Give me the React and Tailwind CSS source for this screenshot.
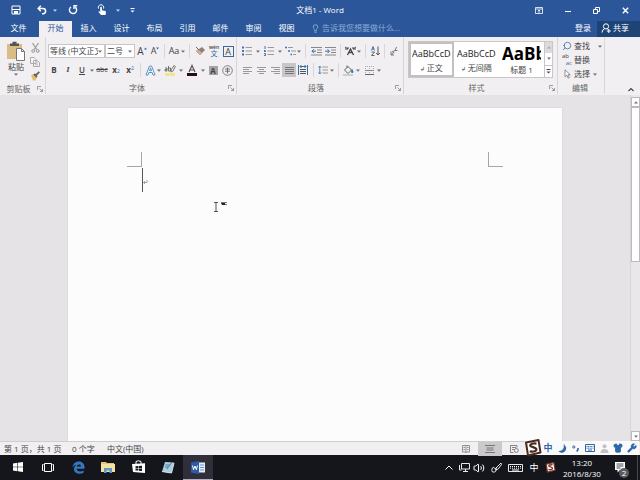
import React, { useState } from 'react'
import clsx from 'clsx'
import { Lightbulb, Search, Shirt, Wrench, Volume2 } from 'lucide-react'

const Icon = ({ w = 12, h = 12, className, children }) => (
    <svg
        width={w}
        height={h}
        viewBox={`0 0 ${w} ${h}`}
        fill="none"
        stroke="currentColor"
        className={clsx('shrink-0', className)}
        aria-hidden="true"
    >
        {children}
    </svg>
)

const CaretIcon = () => (
    <Icon w={4} h={3} className="opacity-75">
        <path d="M0 .5h4L2 2.7z" fill="currentColor" stroke="none" />
    </Icon>
)

const Tool = ({ label, className, children }) => (
    <button
        aria-label={label}
        className={clsx('flex h-3.5 shrink-0 items-center justify-center', className || 'w-3.5')}
    >
        {children}
    </button>
)

const Caret = ({ label, className }) => (
    <Tool label={`${label}选项`} className={className || 'w-1.5'}>
        <CaretIcon />
    </Tool>
)

const Divider = () => <span className="mx-[3px] h-3.5 w-px shrink-0 bg-[#d8d6d8]" />

const Group = ({ title, launcher, className, children }) => (
    <section className={clsx('flex shrink-0 flex-col border-r border-[#d8d6d8]', className)}>
        <div className="flex-1">{children}</div>
        <div className="flex h-3 items-center pr-0.5">
            <h2 className="flex-1 text-center text-[#666]">{title}</h2>
            {launcher && (
                <button aria-label={`${title}设置`}>
                    <Icon w={6} h={6} className="text-[#888]">
                        <path d="M.5 4V.5H4M2.5 2.5l3 3M5.5 3v2.5H3" strokeWidth=".8" />
                    </Icon>
                </button>
            )}
        </div>
    </section>
)

const TitleBar = () => (
    <header className="grid h-[21px] grid-cols-[1fr_auto_1fr] items-center pb-px text-white">
        <div className="flex items-center">
            <Tool label="保存" className="w-8">
                <Icon w={10} h={10}>
                    <path d="M1 1h8v8H1z" />
                    <path d="M1 4.5h8" />
                    <path d="M3 6h4v3H3z" fill="currentColor" stroke="none" />
                </Icon>
            </Tool>
            <Tool label="撤消" className="w-5">
                <Icon w={10} h={10}>
                    <path d="M1 3.5h5a2.5 2.5 0 0 1 0 5.2H5M3.8 .8L1.2 3.5l2.6 2.7" strokeWidth="1.5" />
                </Icon>
            </Tool>
            <Caret label="撤消" />
            <Tool label="重复" className="w-[30px]">
                <Icon w={10} h={10}>
                    <path d="M3 2a3.6 3.6 0 1 0 4.2.1M6 4V.8h3.2" strokeWidth="1.4" />
                </Icon>
            </Tool>
            <Tool label="触摸/鼠标模式" className="w-7">
                <Icon w={10} h={12}>
                    <path d="M1.5 4.5a2.7 2.7 0 1 1 5 0" />
                    <path d="M3.2 3.2q.9-1 1.7 0v3l3.4.7q.8.3.7 1.1L8.5 11H4L1.3 7.8l.7-.6 1.2.6z" fill="currentColor" stroke="none" />
                </Icon>
            </Tool>
            <Caret label="触摸模式" className="w-1" />
            <Tool label="自定义快速访问工具栏" className="w-6">
                <Icon w={5} h={5}>
                    <path d="M.5.5h4" />
                    <path d="M.5 2.5h4l-2 2z" fill="currentColor" stroke="none" />
                </Icon>
            </Tool>
        </div>
        <h1>文档1 - Word</h1>
        <div className="flex justify-end">
            <Tool label="功能区显示选项" className="w-[29px]">
                <Icon w={8} h={7}>
                    <path d="M.5.5h7v6h-7zM.5 2h7M4 6V3M2.8 4.2L4 3l1.2 1.2" strokeWidth=".8" />
                </Icon>
            </Tool>
            <Tool label="最小化" className="w-[29px]">
                <Icon w={6} h={6}>
                    <path d="M0 4.5h6" />
                </Icon>
            </Tool>
            <Tool label="还原" className="w-[29px]">
                <Icon w={7} h={7}>
                    <path d="M.5 2.5h4v4h-4zM2.5 2V.5h4v4H5" />
                </Icon>
            </Tool>
            <Tool label="关闭" className="w-[29px]">
                <Icon w={7} h={7}>
                    <path d="M.8.8l5.4 5.4M6.2.8L.8 6.2" strokeWidth="1.4" />
                </Icon>
            </Tool>
        </div>
    </header>
)

const tabs = ['开始', '插入', '设计', '布局', '引用', '邮件', '审阅', '视图']

const TabBar = () => {
    const [active, setActive] = useState('开始')

    return (
        <nav className="flex h-4 items-stretch text-white">
            <button className="w-[39px] pr-0.5 pb-0.5">文件</button>
            {tabs.map((tab) => (
                <button
                    key={tab}
                    onClick={() => setActive(tab)}
                    className={clsx('w-[33px] pb-0.5', tab === active && 'bg-[#f1eff1] text-[#2b579a]')}
                >
                    {tab}
                </button>
            ))}
            <label className="ml-2 flex flex-1 items-center gap-0.5 pb-0.5 text-[#a9bfe0]">
                <Lightbulb size={9} aria-hidden="true" />
                <input
                    type="text"
                    aria-label="告诉我您想要做什么"
                    placeholder="告诉我您想要做什么..."
                    className="w-24 bg-transparent outline-none placeholder:text-[#8fabd6]"
                />
            </label>
            <button className="w-7 pb-0.5">登录</button>
            <button className="flex w-[43px] items-center gap-0.5 bg-[#1e4477] pb-0.5 pl-1">
                <Icon w={10} h={10}>
                    <circle cx="5" cy="3.4" r="2.6" />
                    <path d="M1 9.5q.3-3 2.6-3.8M6.3 5.8l1 1M7.8 6v4M5.8 8h4" />
                </Icon>
                共享
            </button>
        </nav>
    )
}

const ClipboardGroup = () => (
    <Group title="剪贴板" launcher className="w-[46px]">
        <div className="flex pt-1 pl-1.5">
            <button className="flex w-5 flex-col items-center">
                <Icon w={18} h={20}>
                    <path d="M0 3h15v15H0z" fill="#d9bd85" stroke="none" />
                    <path d="M3 2.5h2.5V.8h4v1.7H12V5H3z" fill="#555" stroke="none" />
                    <path d="M9.5 7.5h5l3 3v9h-8z" fill="#fff" stroke="#777" />
                    <path d="M14.5 7.5v3h3" stroke="#777" />
                </Icon>
                <span>粘贴</span>
                <CaretIcon />
            </button>
            <div className="ml-0.5 flex flex-col">
                <Tool label="剪切">
                    <Icon w={9} h={10} className="text-[#999]">
                        <path d="M1.5 0l4.3 6.500M7.500 0L3.200 6.500" strokeWidth="1.2" />
                        <circle cx="2.200" cy="8" r="1.400" />
                        <circle cx="6.800" cy="8" r="1.400" />
                    </Icon>
                </Tool>
                <Tool label="复制">
                    <Icon w={10} h={10} className="text-[#aaa]">
                        <path d="M.5.5H4L6 2.5v4H.5zM3.5 3.5H7l2.5 2v4h-6z" fill="#f6f5f6" />
                        <path d="M5 6h3M5 7.8h3" stroke="#a9bccf" />
                    </Icon>
                </Tool>
                <Tool label="格式刷">
                    <Icon w={10} h={10}>
                        <path d="M1 4l3-1 3 3-1.5 3.5H3z" fill="#e6bd6a" stroke="none" />
                        <path d="M4 3l3 3M5.5 4.5L9.3.8" stroke="#666" strokeWidth="1.8" />
                    </Icon>
                </Tool>
            </div>
        </div>
    </Group>
)

const Combo = ({ label, value, className }) => (
    <div className={clsx('relative h-3.5 border border-[#c8c6c8] bg-white', className)}>
        <select
            aria-label={label}
            defaultValue={value}
            className="block h-3 w-full appearance-none overflow-hidden bg-transparent pr-1.5 pl-px outline-none"
        >
            <option>{value}</option>
        </select>
        <span className="pointer-events-none absolute inset-y-0 right-0.5 flex items-center">
            <CaretIcon />
        </span>
    </div>
)

const FontGroup = () => (
    <Group title="字体" launcher className="w-[191px]">
        <div className="flex items-center pt-[7px] pl-0.5">
            <Combo label="字体" value="等线 (中文正文)" className="w-[57px]" />
            <Combo label="字号" value="二号" className="w-[30px]" />
            <Tool label="增大字号">
                <span className="text-[10px]">A</span>
                <Icon w={3} h={8} className="text-[#2b6cb0]">
                    <path d="M0 2.5L1.5.5 3 2.5z" fill="currentColor" stroke="none" />
                </Icon>
            </Tool>
            <Tool label="减小字号" className="w-3">
                <span className="text-[9px]">A</span>
                <Icon w={3} h={8} className="text-[#2b6cb0]">
                    <path d="M0 .5h3L1.5 2.5z" fill="currentColor" stroke="none" />
                </Icon>
            </Tool>
            <Divider />
            <Tool label="更改大小写" className="w-3">
                <span className="text-[9px]">Aa</span>
            </Tool>
            <Caret label="更改大小写" />
            <Divider />
            <Tool label="清除所有格式">
                <Icon w={11} h={10}>
                    <path d="M1 5l4 4 5-5-3-3z" fill="#8a8280" stroke="none" />
                    <path d="M1 5l2-2 4 4-2 2z" fill="#d8a98c" stroke="none" />
                    <path d="M1 1l3 3" stroke="#666" />
                </Icon>
            </Tool>
            <Tool label="拼音指南" className="w-3.5 flex-col">
                <span className="text-[5px] leading-[6px] font-semibold">wén</span>
                <span className="text-[7px] leading-[8px] text-[#2b6cb0]">文</span>
            </Tool>
            <Tool label="字符边框">
                <span className="size-[11px] border border-[#3b6a96] text-[9px] leading-[9px]">A</span>
            </Tool>
        </div>
        <div className="flex items-center pt-[5px] pl-px">
            <Tool label="加粗"><b>B</b></Tool>
            <Tool label="倾斜"><i className="font-serif font-bold">I</i></Tool>
            <Tool label="下划线"><span className="font-semibold underline">U</span></Tool>
            <Caret label="下划线" />
            <Tool label="删除线"><s className="text-[7px]">abc</s></Tool>
            <Tool label="下标">
                <b>x</b><sub className="text-[5px] text-[#2b6cb0]">2</sub>
            </Tool>
            <Tool label="上标">
                <b>x</b><sup className="text-[5px] text-[#2b6cb0]">2</sup>
            </Tool>
            <Divider />
            <Tool label="文本效果" className="w-3">
                <Icon w={11} h={11}>
                    <path d="M1 10L4.5 1h2L10 10H8L7.2 7.5H3.8L3 10zM4.4 5.8h2.2L5.5 2.8z" fill="#fff" stroke="#5b93c5" />
                </Icon>
            </Tool>
            <Caret label="文本效果" />
            <Tool label="突出显示" className="w-4">
                <Icon w={12} h={12}>
                    <path d="M1 9h10v3H1z" fill="#f3e58c" stroke="none" />
                    <path d="M1 4h2v3H1V5.5h2M4.5 2v5h2V4h-2M10.5 1L7 6v2l2-1 2.5-5" stroke="#666" strokeWidth=".9" />
                </Icon>
            </Tool>
            <Caret label="突出显示" />
            <Tool label="字体颜色" className="w-4">
                <Icon w={10} h={12}>
                    <path d="M2 8l3-6.5L8 8M3.2 6h3.6" stroke="#555" strokeWidth="1.2" />
                    <path d="M0 9h10v3H0z" fill="#2a0d10" stroke="none" />
                </Icon>
            </Tool>
            <Caret label="字体颜色" />
            <Tool label="字符底纹">
                <span className="size-[9px] bg-[#a5a3a5] text-[8px] leading-[9px] font-bold">A</span>
            </Tool>
            <Tool label="带圈字符">
                <Icon w={11} h={11}>
                    <circle cx="5.5" cy="5.5" r="4.8" stroke="#666" strokeWidth=".8" />
                    <path d="M3 4h5M5.5 2.5v6M3 6.2h5" stroke="#666" strokeWidth=".9" />
                </Icon>
            </Tool>
        </div>
    </Group>
)

const ListIcon = ({ children }) => (
    <Icon w={10} h={10}>
        <path d="M3.5 1.5H10M3.5 5H10M3.5 8.5H10" stroke="#9a9a9a" />
        {children}
    </Icon>
)

const AlignIcon = ({ d }) => (
    <Icon w={9} h={9}>
        <path d={d} stroke="#9a9a9a" />
    </Icon>
)

const ParagraphGroup = () => (
    <Group title="段落" launcher className="w-[167px]">
        <div className="flex items-center pt-[7px] pl-[3px]">
            <Tool label="项目符号">
                <ListIcon>
                    <path d="M0 1.5h2M0 5h2M0 8.5h2" stroke="#3b78b5" strokeWidth="2" />
                </ListIcon>
            </Tool>
            <Caret label="项目符号" className="w-2" />
            <Tool label="编号">
                <ListIcon>
                    <path d="M1 0v3M0 4.5h1.5v1H0M0 7.5h1.5v2H0" stroke="#3b78b5" />
                </ListIcon>
            </Tool>
            <Caret label="编号" className="w-2" />
            <Tool label="多级列表" className="w-3">
                <Icon w={11} h={10}>
                    <path d="M3 1.5h5M6 5h5M8 8.5h3" stroke="#9a9a9a" />
                    <path d="M0 1.5h2M3 5h2M5.5 8.5h1.5" stroke="#3b78b5" strokeWidth="1.4" />
                </Icon>
            </Tool>
            <Caret label="多级列表" />
            <Divider />
            <Tool label="减少缩进量">
                <Icon w={11} h={10}>
                    <path d="M0 1.5h11M6 4h5M6 6.5h5M0 9h11" stroke="#888" />
                    <path d="M5 5.2H1M3 3.2l-2 2 2 2" stroke="#2b6cb0" />
                </Icon>
            </Tool>
            <Tool label="增加缩进量">
                <Icon w={11} h={10}>
                    <path d="M0 1.5h11M6 4h5M6 6.5h5M0 9h11" stroke="#888" />
                    <path d="M0 5.2h4M2.5 3.2l2 2-2 2" stroke="#2b6cb0" />
                </Icon>
            </Tool>
            <Divider />
            <Tool label="中文版式" className="w-3">
                <Icon w={11} h={10}>
                    <path d="M2.5 9l3-6 3 6M4 6.5h3" stroke="#444" strokeWidth="1.3" />
                    <path d="M0 1l3 2M0 3h3V1M11 1L8 3M11 3H8V1" stroke="#444" />
                </Icon>
            </Tool>
            <Caret label="中文版式" />
            <Divider />
            <Tool label="排序" className="w-3">
                <Icon w={9} h={10}>
                    <path d="M.5 4.5L2 .5l1.5 4M1 3h2" stroke="#2b6cb0" strokeWidth=".9" />
                    <path d="M.5 6h3l-3 3.5h3" stroke="#555" strokeWidth=".9" />
                    <path d="M7 .5v8.5M5.2 7L7 9l1.8-2" stroke="#555" />
                </Icon>
            </Tool>
            <Divider />
            <Tool label="显示编辑标记" className="w-3">
                <Icon w={8} h={9}>
                    <path d="M6.5 0L5 3.5h2.5M5 3.5L2 5M4 5l-2.5 3M1 4.5v3.5h3" stroke="#777" />
                </Icon>
            </Tool>
        </div>
        <div className="flex items-center pt-[5px] pl-[3px]">
            <Tool label="左对齐"><AlignIcon d="M0 1.5h9M0 3.5h6M0 5.5h9M0 7.5h6" /></Tool>
            <Tool label="居中"><AlignIcon d="M0 1.5h9M2 3.5h5M0 5.5h9M2 7.5h5" /></Tool>
            <Tool label="右对齐"><AlignIcon d="M0 1.5h9M3 3.5h6M0 5.5h9M3 7.5h6" /></Tool>
            <Tool label="两端对齐" className="w-3.5 bg-[#c8c6c8]">
                <Icon w={9} h={9}>
                    <path d="M0 1.5h9M0 3.5h9M0 5.5h9M0 7.5h9" stroke="#777" />
                </Icon>
            </Tool>
            <Tool label="分散对齐">
                <Icon w={10} h={10}>
                    <path d="M.5 0v10M9.5 0v10M2 1.5h6M3.5 0L2 1.5 3.5 3M6.5 0L8 1.5 6.5 3" stroke="#3b6f9e" />
                    <path d="M2 4.5h6M2 6.5h6M2 8.5h6" stroke="#555" />
                </Icon>
            </Tool>
            <Divider />
            <Tool label="行距" className="w-3">
                <Icon w={10} h={10}>
                    <path d="M4.5 2H10M4.5 5H10M4.5 8H10" stroke="#9a9a9a" />
                    <path d="M1.8 1v8M.3 2.6L1.8 1l1.5 1.6M.3 7.4L1.8 9l1.5-1.6" stroke="#3b78b5" strokeWidth=".9" />
                </Icon>
            </Tool>
            <Caret label="行距" />
            <Divider />
            <Tool label="底纹" className="w-3">
                <Icon w={11} h={11}>
                    <path d="M1.5 5L5 1.5 8.5 5 5 8.5zM4 3V.5" stroke="#666" />
                    <path d="M9 4.5q2 3 .3 3.5Q8 8 9 4.5z" fill="#3b78b5" stroke="#3b78b5" />
                    <path d="M0 10h10" stroke="#aaa" />
                </Icon>
            </Tool>
            <Caret label="底纹" className="w-2" />
            <Tool label="边框">
                <Icon w={9} h={9}>
                    <path d="M.5 0v9M8.5 0v9M4.5 0v9M0 .5h9" stroke="#aaa" strokeDasharray="1 1" />
                    <path d="M0 4.5h9" stroke="#888" />
                    <path d="M0 8.5h9" stroke="#666" />
                </Icon>
            </Tool>
            <Caret label="边框" />
        </div>
    </Group>
)

const styles = [
    { name: '正文', mark: true, sample: 'AaBbCcDd', heading: false },
    { name: '无间隔', mark: true, sample: 'AaBbCcDd', heading: false },
    { name: '标题 1', mark: false, sample: 'AaBb', heading: true },
]

const StylesGroup = () => {
    const [selected, setSelected] = useState('正文')

    return (
        <Group title="样式" launcher className="w-[154px]">
            <div className="px-1 pt-1">
                <div className="flex h-[37px] border border-[#c8c6c8] bg-white">
                    {styles.map((style) => (
                        <button
                            key={style.name}
                            onClick={() => setSelected(style.name)}
                            className={clsx(
                                'flex min-w-0 flex-1 flex-col border-2 px-px',
                                style.name === selected ? 'border-[#c2c0c2]' : 'border-transparent'
                            )}
                        >
                            <span
                                className={clsx(
                                    'h-5 w-full overflow-hidden text-left leading-[19px] whitespace-nowrap',
                                    style.heading ? 'text-[17px] font-bold text-black' : 'text-[9px] text-[#222]'
                                )}
                            >
                                {style.sample}
                            </span>
                            <span className="w-full text-center leading-[11px]">
                                {style.mark && <span className="text-[6px]">↲ </span>}
                                {style.name}
                            </span>
                        </button>
                    ))}
                    <div className="flex w-2 flex-col border-l border-[#c8c6c8]">
                        <button aria-label="上一行" className="flex flex-1 items-center justify-center bg-[#dcdadc] text-[#aaa]">
                            <Icon w={4} h={3}>
                                <path d="M0 2.5h4L2 .3z" fill="currentColor" stroke="none" />
                            </Icon>
                        </button>
                        <button aria-label="下一行" className="flex flex-1 items-center justify-center">
                            <CaretIcon />
                        </button>
                        <button aria-label="更多样式" className="flex flex-1 items-center justify-center border-t border-[#c8c6c8]">
                            <Icon w={5} h={5}>
                                <path d="M.5.5h4" />
                                <path d="M.5 2.5h4l-2 2z" fill="currentColor" stroke="none" />
                            </Icon>
                        </button>
                    </div>
                </div>
            </div>
        </Group>
    )
}

const EditGroup = () => (
    <Group title="编辑" className="w-[47px]">
        <div className="flex flex-col pt-0.5 pl-1">
            <button className="flex h-3.5 items-center gap-0.5">
                <Search size={10} className="-scale-x-100 text-[#3b78b5]" />
                <span className="mr-1.5">查找</span>
                <CaretIcon />
            </button>
            <button className="flex h-3.5 items-center gap-0.5">
                <span className="flex w-2.5 flex-col text-[6px] leading-[7px]">
                    <span className="text-left">ab</span>
                    <span className="text-right text-[#2b6cb0]">ac</span>
                </span>
                <span>替换</span>
            </button>
            <button className="flex h-3.5 items-center gap-0.5">
                <Icon w={10} h={10}>
                    <path d="M3 .8v7l1.8-1.6 1.3 3 1.2-.6-1.3-2.8h2.3z" fill="#fff" stroke="#777" strokeWidth=".8" />
                </Icon>
                <span className="mr-px">选择</span>
                <CaretIcon />
            </button>
        </div>
    </Group>
)

const Ribbon = () => (
    <div className="flex h-[58px] shrink-0 bg-[#f1eff1] pb-px">
        <ClipboardGroup />
        <FontGroup />
        <ParagraphGroup />
        <StylesGroup />
        <EditGroup />
        <div className="flex flex-1 items-end justify-end pr-1.5 pb-0.5">
            <button aria-label="折叠功能区">
                <Icon w={6} h={5}>
                    <path d="M.5 4L3 1.5 5.5 4" strokeWidth="1.2" />
                </Icon>
            </button>
        </div>
    </div>
)

const Document = () => (
    <main className="flex min-h-0 flex-1 bg-[#e5e3e5]">
        <div className="flex min-w-0 flex-1 justify-center overflow-hidden pt-[13px]">
            <article className="relative w-[494px] bg-[#fdfcfd] px-[59px] pt-11 shadow-[0_0_1px_#bbb]">
                <div className="flex justify-between">
                    <span className="size-[15px] border-r border-b border-[#a8a6a8]" />
                    <span className="size-[15px] border-b border-l border-[#a8a6a8]" />
                </div>
                <div className="mx-[15px] mt-px flex h-6 items-center border-l border-[#555]">
                    <Icon w={5} h={6} className="mt-1.5 text-[#999]">
                        <path d="M4 0v2.5H.5M2 1L.5 2.5 2 4" strokeWidth=".9" />
                    </Icon>
                </div>
                {/* Mouse pointer */}
                <Icon w={16} h={12} className="absolute top-[93px] left-[146px]">
                    <path d="M0 1.5h4M2 1v9.5M0 10.5h4" stroke="#555" />
                    <path d="M7 1.5h6M9 3.5h4" stroke="#777" />
                    <path d="M7 2h4v2H8z" fill="#222" stroke="none" />
                </Icon>
            </article>
        </div>
        <div className="flex w-2.5 flex-col border-l border-[#d6d4d6] bg-[#e9e7e9] pt-0.5">
            <button aria-label="向上滚动" className="flex h-2.5 items-center justify-center border border-[#bbb] bg-white">
                <Icon w={4} h={3} className="opacity-75">
                    <path d="M0 2.5h4L2 .3z" fill="currentColor" stroke="none" />
                </Icon>
            </button>
            <div className="h-[155px] border border-[#bbb] bg-white" />
            <div className="flex-1" />
            <button aria-label="向下滚动" className="flex h-2.5 items-center justify-center border border-[#bbb] bg-white">
                <CaretIcon />
            </button>
        </div>
    </main>
)

const SogouLogo = ({ size, ink = '#4a2a20' }) => (
    <svg width={size} height={size} viewBox="0 0 18 18" fill="none" className="shrink-0" aria-hidden="true">
        <path d="M2 3.5L14.5 1l2 12.5L4 16.5z" fill="#fff" stroke={ink} strokeWidth="2" strokeLinejoin="round" />
        <path d="M12.5 4.6q-5-.6-6.3 1.4c-.7 2.2 6 2 6.2 4.4.1 2.4-4.4 2.6-6.7 1.8" stroke={ink} strokeWidth="2.2" />
    </svg>
)

const ImeBar = () => (
    <div className="absolute right-px bottom-0 flex h-3.5 items-center bg-[#fbfafb] text-[#2e66a8]">
        <Tool label="搜狗输入法" className="w-4"><SogouLogo size={18} /></Tool>
        <Tool label="中英文切换"><b className="text-[9px]">中</b></Tool>
        <Tool label="全半角">
            <Icon w={9} h={9}>
                <path d="M6 .5Q9.500 4 7 7T.8 7.500Q7 6.500 6 .5z" fill="currentColor" strokeWidth=".5" />
            </Icon>
        </Tool>
        <Tool label="中英文标点">
            <Icon w={8} h={8}>
                <circle cx="1.8" cy="3" r="1.1" />
                <path d="M6 4v1.5L4.8 7.5" strokeWidth="1.6" />
            </Icon>
        </Tool>
        <Tool label="软键盘">
            <Icon w={10} h={8}>
                <path d="M.5.5h9v7h-9z" />
                <path d="M1.5 2.5h7M1.5 4.2h7" strokeDasharray="1 .6" />
                <path d="M3 6h4" />
            </Icon>
        </Tool>
        <Tool label="登录">
            <Icon w={9} h={9} className="text-[#c4c2c4]">
                <circle cx="4.5" cy="2.3" r="2" fill="currentColor" stroke="none" />
                <path d="M.5 9q0-4 4-4t4 4z" fill="currentColor" stroke="none" />
            </Icon>
        </Tool>
        <Tool label="皮肤"><Shirt size={10} fill="currentColor" /></Tool>
        <Tool label="工具箱"><Wrench size={10} fill="currentColor" /></Tool>
    </div>
)

const StatusBar = () => (
    <footer className="relative flex h-3.5 shrink-0 items-center border-t border-[#cfcdcf] bg-[#f1eff1] pl-1">
        <span className="w-[68px]">第 1 页，共 1 页</span>
        <span className="w-[35px]">0 个字</span>
        <span className="flex-1">中文(中国)</span>
        <div className="mr-[114px] flex">
            <Tool label="阅读视图" className="w-6">
                <Icon w={8} h={8}>
                    <path d="M.5.5h7v6.5h-7zM4 1v7M1.5 2.5h1.5M5 2.5h1.5M1.5 4.5h1.5M5 4.5h1.5" stroke="#888" strokeWidth=".9" />
                </Icon>
            </Tool>
            <Tool label="页面视图" className="w-6 bg-[#cbc9cb]">
                <Icon w={10} h={8}>
                    <path d="M0 .5h10M0 7.5h10M1.5 3h7M1.5 5h7" stroke="#777" />
                </Icon>
            </Tool>
            <Tool label="Web 版式视图" className="w-6">
                <Icon w={9} h={8}>
                    <path d="M7 2.5v-2H.5v7h3M2 2.5h4M2 4.5h2" stroke="#777" strokeWidth=".9" />
                    <circle cx="6.3" cy="5.5" r="2" stroke="#777" strokeWidth=".9" />
                </Icon>
            </Tool>
        </div>
        <ImeBar />
    </footer>
)

const TaskButton = ({ label, active, children }) => (
    <button
        aria-label={label}
        className={clsx(
            'flex h-full w-[30px] items-center justify-center border-b',
            active ? 'border-[#b9a9c9] bg-[#302e38]' : 'border-transparent'
        )}
    >
        {children}
    </button>
)

const Taskbar = () => (
    <footer className="flex h-[25px] shrink-0 items-center bg-[#14161b] text-white">
        <div className="flex h-full flex-1 pl-[3px]">
            <TaskButton label="开始">
                <Icon w={10} h={10}>
                    <path d="M0 1.5L4.4.8v3.9H0zM5 .7L10 0v4.7H5zM0 5.3h4.4v3.9L0 8.5zM5 5.3h5V10l-5-.7z" fill="currentColor" stroke="none" />
                </Icon>
            </TaskButton>
            <TaskButton label="任务视图">
                <Icon w={12} h={9}>
                    <path d="M2.5.5h7v8h-7zM1.5 1.5h-1v6h1M10.5 1.5h1v6h-1" />
                </Icon>
            </TaskButton>
            <TaskButton label="Microsoft Edge">
                <Icon w={13} h={13}>
                    <path d="M.5 6.5C1 2.5 3.5.5 6.8.5c3.7 0 5.7 2.6 5.7 5.6v1.6H4.6c.2 3.2 4.4 3.4 7 1.7v2.4C7.5 13.8 2 12.5 2 8.2c0-2 1-3.5 2.7-4.4C2.8 4 1.5 5 .5 6.5zM4.7 5.5h4.4C9 2.6 5.2 2.9 4.7 5.5z" fill="#3478bf" stroke="none" />
                </Icon>
            </TaskButton>
            <TaskButton label="文件资源管理器">
                <Icon w={14} h={12}>
                    <path d="M0 1h5l1 1h7v9H0z" fill="#e5c676" stroke="none" />
                    <path d="M0 3h14v8H0z" fill="#f6e1a0" stroke="none" />
                    <path d="M3 7h8v5H8.5V9.5h-3V12H3z" fill="#5b9bd0" stroke="none" />
                </Icon>
            </TaskButton>
            <TaskButton label="应用商店">
                <Icon w={13} h={14}>
                    <path d="M0 4l13-.7V13L1 12z" fill="currentColor" stroke="none" />
                    <path d="M4 4V1.5Q6.5 0 9 1.5V4" />
                    <path d="M3.5 6.2L6 6v2H3.5zM6.6 6L10 5.8V8H6.6zM3.5 8.6H6v2l-2.5-.2zM6.6 8.6H10V11l-3.4-.3z" fill="#14161b" stroke="none" />
                </Icon>
            </TaskButton>
            <TaskButton label="记事本">
                <Icon w={14} h={13}>
                    <path d="M4 1l9 .5L10.5 12 1 10.5z" fill="#a9cde0" stroke="none" />
                    <path d="M1 10.5l9.500 1.500L13 2" stroke="#dfe8ec" />
                    <path d="M11 1L6 8M4.5 4h4M4 6h3" stroke="#4f7f9d" />
                </Icon>
            </TaskButton>
            <TaskButton label="Word" active>
                <Icon w={14} h={13}>
                    <path d="M7 1.5h7v10H7z" fill="#e8eef7" stroke="none" />
                    <path d="M9 4h4M9 6.5h4M9 9h4" stroke="#6d90c4" />
                    <path d="M0 1.5L8 0v13L0 11.5z" fill="#2b5cab" stroke="none" />
                    <path d="M1.5 4.5l1 4.2L4 5l1.4 3.7 1.1-4.2" stroke="#fff" />
                </Icon>
            </TaskButton>
        </div>
        <Tool label="显示隐藏的图标" className="w-4">
            <Icon w={8} h={5}>
                <path d="M.5 4.5L4 1l3.500 3.500" />
            </Icon>
        </Tool>
        <Tool label="网络" className="w-3.5">
            <Icon w={11} h={9}>
                <path d="M2.5.5h8V6h-8zM6.5 6v2.5M4 8.5h5M.5 2v5h2" strokeWidth=".9" />
            </Icon>
        </Tool>
        <Tool label="音量" className="w-4"><Volume2 size={12} strokeWidth={2} /></Tool>
        <Tool label="手写笔" className="w-[18px]">
            <Icon w={11} h={11}>
                <path d="M10 1L5 6l.5 2L8 6l2.5-3.5zM5 7.5Q2 3.5 1 7t2.5 3Q6 9.5 4.5 6.5" strokeWidth=".9" />
            </Icon>
        </Tool>
        <Tool label="触摸键盘" className="w-5">
            <Icon w={15} h={8}>
                <path d="M.5.5h14v7H.5z" strokeWidth=".9" />
                <path d="M2 2.5h11M2 4.2h11" strokeDasharray="1 1" />
                <path d="M4 6h7" />
            </Icon>
        </Tool>
        <Tool label="输入法中文" className="w-[18px]"><span className="text-[9px]">中</span></Tool>
        <Tool label="搜狗拼音" className="w-3.5"><SogouLogo size={11} ink="#7a3524" /></Tool>
        <time className="w-[50px] text-center leading-[11px]" dateTime="2016-08-30T13:20">
            13:20<br />2016/8/30
        </time>
        <button aria-label="操作中心" className="relative flex h-full w-[26px] items-center justify-center">
            <Icon w={12} h={11}>
                <path d="M1 0h10v8H6l-2.5 2.5V8H1z" fill="currentColor" stroke="none" />
                <path d="M2.5 2h7M2.5 4h7M2.5 6h4" stroke="#14161b" strokeWidth=".8" />
            </Icon>
            <span className="absolute right-1 bottom-0.5 size-2.5 rounded-full bg-[#5a5c60] leading-[10px]">2</span>
        </button>
        <span className="mr-0.5 ml-1 h-full w-px bg-[#44464a]" />
    </footer>
)

const App = () => (
    <div className="flex h-screen flex-col overflow-hidden font-['Open_Sans','Noto_Sans_CJK_SC',sans-serif] text-[8px] leading-3 text-[#444]">
        <div className="shrink-0 bg-[#2b579a]">
            <TitleBar />
            <TabBar />
        </div>
        <Ribbon />
        <Document />
        <StatusBar />
        <Taskbar />
    </div>
)

export default App
